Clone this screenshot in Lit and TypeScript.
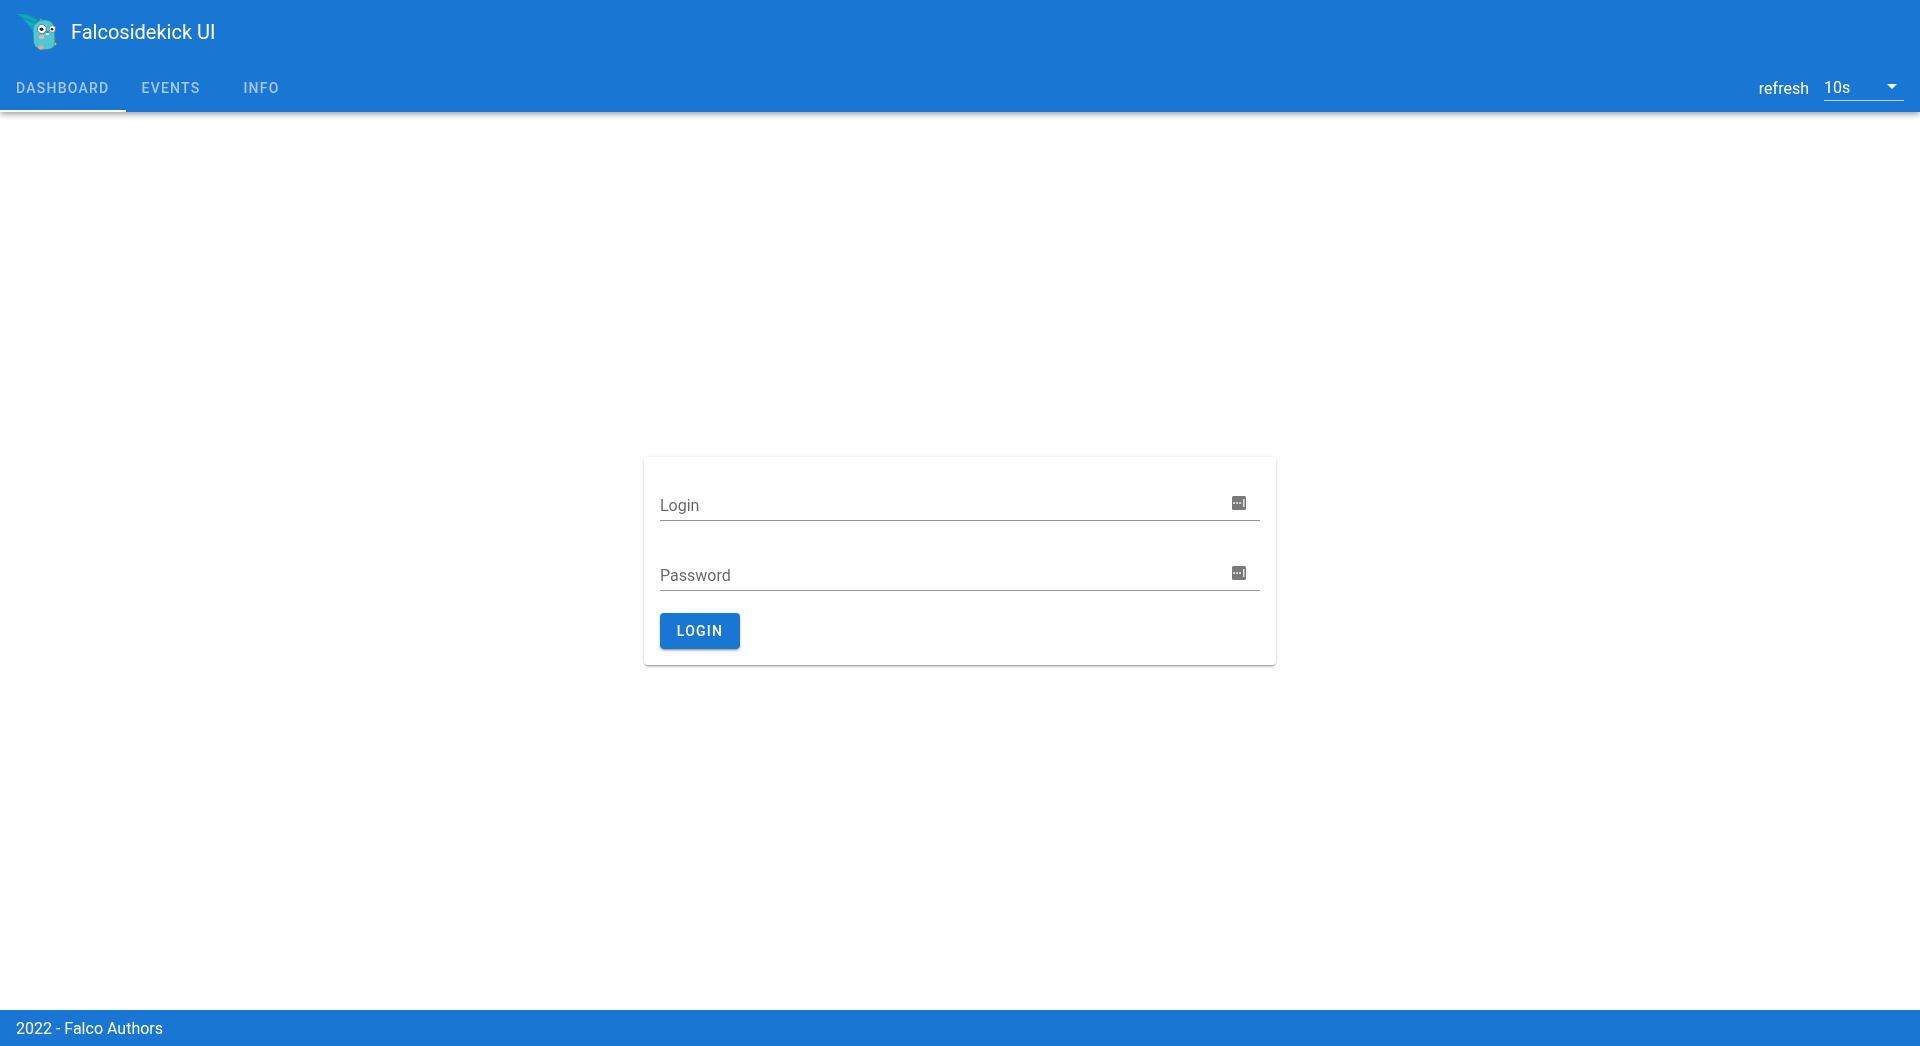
import { LitElement, html, css } from "lit";
import { customElement } from "lit/decorators.js";

const keyIcon = html`<svg class="icon" viewBox="0 0 14 14" width="14" height="14">
  <rect x="0" y="0" width="14" height="14" rx="1.5" fill="#7a7a7a"/>
  <rect x="1.2" y="6.2" width="1.7" height="1.7" fill="#f4f4f4"/>
  <rect x="4.2" y="6.2" width="1.7" height="1.7" fill="#f4f4f4"/>
  <rect x="7.2" y="6.2" width="1.7" height="1.7" fill="#f4f4f4"/>
  <rect x="11.2" y="3" width="1.2" height="8" fill="#fff"/>
</svg>`;

const logo = html`<svg class="logo" viewBox="0 0 48 44" width="48" height="44">
  <path d="M10 3 L25 9.5 L24 14 L15 7 Z" fill="#0e8fa6"/>
  <path d="M3 5 L12 5.5 L23 11 L22 15 Z" fill="#14a8bd"/>
  <path d="M4.5 6.5 L22 13 L21 17 L9 10 Z" fill="#0f9cb3"/>
  <path d="M8 10 L21 15 L20 20 L13 14 Z" fill="#16aec2"/>
  <path d="M12 14 L20 18 L19 22.5 Z" fill="#10a0b6"/>
  <path d="M24.5 12 L27 9.5 L29 12 Z" fill="#42bcc9"/>
  <path d="M19 22 C19 15 24 11 30.5 11 C37 11 40.5 15 40.5 21 L41 33 C41.2 38 38 40.5 31 40.5 C24 40.5 20 38 19.6 33 Z" fill="#4fc8d4" stroke="#2d8a9b" stroke-width=".7"/>
  <circle cx="27.8" cy="20" r="4.5" fill="#fff" stroke="#3b6470" stroke-width=".7"/>
  <circle cx="38.3" cy="20" r="3.4" fill="#fff" stroke="#3b6470" stroke-width=".7"/>
  <circle cx="27.6" cy="20.3" r="1.8" fill="#1f2a30"/>
  <circle cx="38" cy="20.2" r="1.3" fill="#1f2a30"/>
  <ellipse cx="33.4" cy="23" rx="1.6" ry="1" fill="#7d6a5e"/>
  <ellipse cx="33.4" cy="25.2" rx="1.9" ry="1.1" fill="#cfe9e6"/>
  <path d="M25 26.5 L30 26 L30.5 29.5 L25.5 30 Z" fill="#eab898"/>
  <ellipse cx="27" cy="38.6" rx="2.8" ry="2.1" fill="#e8a882"/>
  <ellipse cx="41.5" cy="30" rx=".9" ry="1.5" fill="#7d6a5e"/>
  <ellipse cx="41.5" cy="35" rx=".9" ry="1.2" fill="#e8a882"/>
</svg>`;

@customElement("app-root")
export class AppRoot extends LitElement {
  static styles = css`
    :host {
      display: flex;
      flex-direction: column;
      height: 100vh;
      overflow: hidden;
      font-family: Roboto, "Liberation Sans", sans-serif;
      color: rgba(0, 0, 0, 0.87);
      will-change: transform;
    }
    header {
      background: #1976d2;
      color: #fff;
      height: 112px;
      flex: none;
      position: relative;
      z-index: 1;
      box-shadow: 0 2px 4px -1px rgba(0, 0, 0, 0.2), 0 4px 5px 0 rgba(0, 0, 0, 0.14), 0 1px 10px 0 rgba(0, 0, 0, 0.12);
      display: flex;
      flex-direction: column;
    }
    .top {
      height: 64px;
      display: flex;
      align-items: center;
      padding-left: 14px;
    }
    .logo {
      display: block;
      margin-top: -2px;
    }
    .title {
      font-size: 20px;
      line-height: 1.5;
      font-weight: 400;
      margin-left: 9px;
    }
    .bottom {
      height: 48px;
      display: flex;
      justify-content: space-between;
    }
    nav {
      display: flex;
    }
    .tab {
      min-width: 90px;
      padding: 0 16px;
      box-sizing: border-box;
      display: flex;
      align-items: center;
      justify-content: center;
      font-size: 14px;
      font-weight: 500;
      letter-spacing: 0.0892857em;
      text-transform: uppercase;
      color: rgba(255, 255, 255, 0.6);
      border-bottom: 2px solid transparent;
      padding-top: 2px;
    }
    .tab.active {
      border-bottom-color: #fff;
    }
    .refresh {
      display: flex;
      align-items: center;
      padding-right: 16px;
      font-size: 16px;
    }
    .refresh-label {
      margin-right: 15px;
    }
    .select {
      width: 80px;
      height: 27px;
      box-sizing: border-box;
      border-bottom: 1px solid rgba(255, 255, 255, 0.7);
      display: flex;
      align-items: center;
      justify-content: space-between;
      margin-top: -1px;
    }
    .caret {
      width: 0;
      height: 0;
      border-left: 5px solid transparent;
      border-right: 5px solid transparent;
      border-top: 5px solid #fff;
      margin-right: 7px;
      margin-top: -2px;
    }
    main {
      flex: 1;
      display: flex;
      align-items: center;
      justify-content: center;
    }
    .card {
      width: 632px;
      height: 208px;
      box-sizing: border-box;
      padding: 16px;
      border-radius: 4px;
      background: #fff;
      box-shadow: 0 3px 1px -2px rgba(0, 0, 0, 0.2), 0 2px 2px 0 rgba(0, 0, 0, 0.14), 0 1px 5px 0 rgba(0, 0, 0, 0.12);
    }
    .field {
      height: 32px;
      margin-top: 16px;
      box-sizing: border-box;
      border-bottom: 1px solid rgba(0, 0, 0, 0.42);
      display: flex;
      align-items: center;
      justify-content: space-between;
      font-size: 16px;
      color: rgba(0, 0, 0, 0.6);
    }
    .field + .field {
      margin-top: 38px;
    }
    .label {
      padding-top: 2px;
    }
    .icon {
      display: block;
      margin-right: 14px;
      margin-top: -3px;
    }
    button {
      display: block;
      margin-top: 22px;
      width: 80px;
      height: 36px;
      padding: 0;
      border: none;
      border-radius: 4px;
      background: #1976d2;
      color: #fff;
      font-family: inherit;
      font-size: 14px;
      font-weight: 500;
      letter-spacing: 0.0892857em;
      text-transform: uppercase;
      box-shadow: 0 3px 1px -2px rgba(0, 0, 0, 0.2), 0 2px 2px 0 rgba(0, 0, 0, 0.14), 0 1px 5px 0 rgba(0, 0, 0, 0.12);
    }
    footer {
      flex: none;
      height: 36px;
      background: #1976d2;
      color: #fff;
      display: flex;
      align-items: center;
      padding-left: 16px;
      font-size: 16px;
    }
  `;

  render() {
    return html`
      <header>
        <div class="top">
          ${logo}
          <div class="title">Falcosidekick UI</div>
        </div>
        <div class="bottom">
          <nav>
            <div class="tab active">Dashboard</div>
            <div class="tab">Events</div>
            <div class="tab">Info</div>
          </nav>
          <div class="refresh">
            <span class="refresh-label">refresh</span>
            <div class="select"><span>10s</span><span class="caret"></span></div>
          </div>
        </div>
      </header>
      <main>
        <div class="card">
          <div class="field"><span class="label">Login</span>${keyIcon}</div>
          <div class="field"><span class="label">Password</span>${keyIcon}</div>
          <button>Login</button>
        </div>
      </main>
      <footer>2022 - Falco Authors</footer>
    `;
  }
}
